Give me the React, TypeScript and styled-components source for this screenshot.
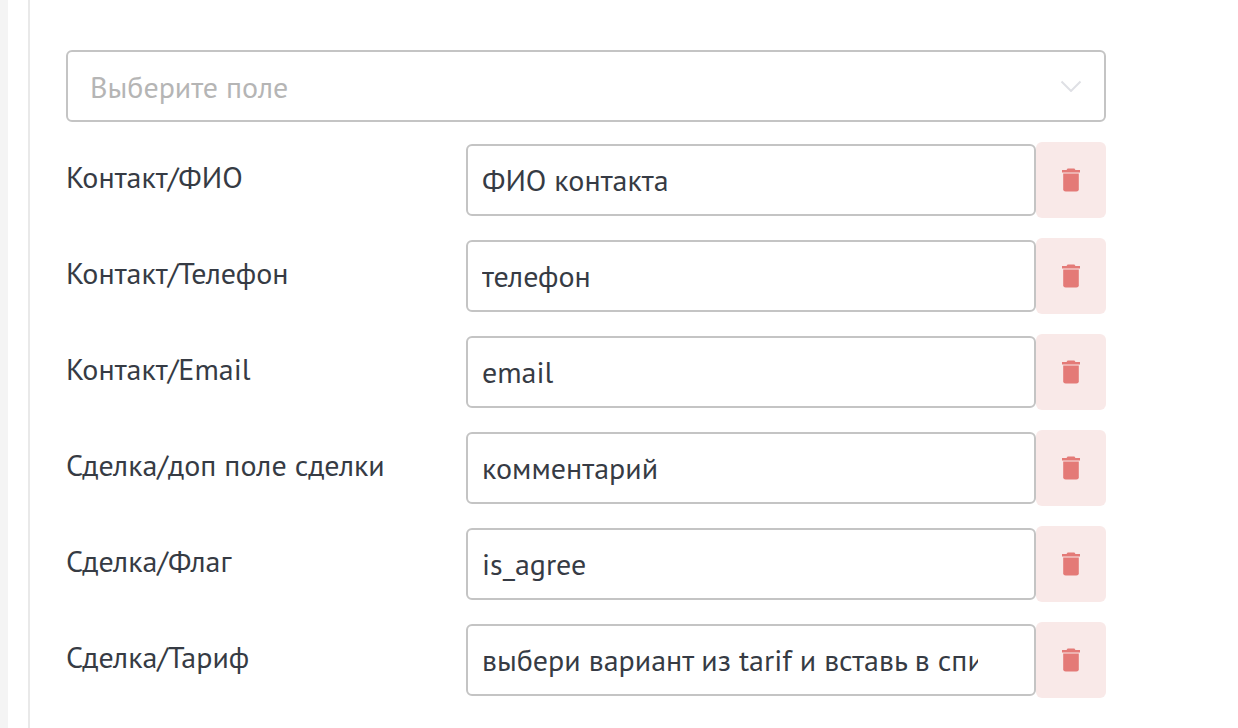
import React, { useState } from "react";
import styled, { createGlobalStyle } from "styled-components";

const GlobalStyle = createGlobalStyle`
  *, *::before, *::after { box-sizing: border-box; }
  body {
    margin: 0;
    background: #ffffff;
    color: #363b44;
    font-family: "PT Sans", "Noto Sans", sans-serif;
    font-size: 30px;
    line-height: 36px;
  }
`;

const Page = styled.div`
  display: flex;
  gap: 20px;
  min-height: 100vh;
`;

const Gutter = styled.div`
  flex: 0 0 8px;
  background: #f4f4f4;
`;

const Panel = styled.main`
  flex: 1;
  min-width: 0;
  padding: 50px 132px 30px 36px;
  border-left: 2px solid #e9e9e9;
`;

const FieldForm = styled.form`
  display: flex;
  flex-direction: column;
  gap: 20px;
`;

const SelectWrap = styled.div`
  position: relative;
`;

const FieldSelect = styled.select`
  display: block;
  width: 100%;
  height: 72px;
  padding: 2px 60px 0 22px;
  border: 2px solid #c4c4c4;
  border-radius: 6px;
  appearance: none;
  background: #ffffff;
  color: #b5b5b5;
  font: inherit;
`;

const Chevron = styled.svg`
  position: absolute;
  top: 30px;
  right: 24px;
  pointer-events: none;
`;

const Row = styled.div`
  display: flex;
  align-items: center;
`;

const RowLabel = styled.label`
  flex: 0 0 400px;
  padding-bottom: 6px;
  white-space: nowrap;
`;

const RowInput = styled.input`
  flex: 1;
  min-width: 0;
  height: 72px;
  padding: 0 56px 2px 14px;
  border: 2px solid #c4c4c4;
  border-radius: 6px;
  background: #ffffff;
  color: inherit;
  font: inherit;
`;

const DeleteButton = styled.button`
  display: flex;
  flex: 0 0 70px;
  align-items: center;
  justify-content: center;
  height: 76px;
  padding: 0;
  border: 0;
  border-radius: 6px;
  background: #f9e9e8;
  color: #e47a77;
  cursor: pointer;
`;

const TrashIcon = () => (
  <svg width="18" height="24" viewBox="0 0 18 24" fill="currentColor" aria-hidden="true">
    <path d="M5.6 0.6h6.8l1.1 1.3H18v2.7H0V1.9h4.5z" />
    <path d="M1.2 5.5h15.6v15.7a2.4 2.4 0 0 1-2.4 2.4H3.6a2.4 2.4 0 0 1-2.4-2.4z" />
  </svg>
);

const initialFields = [
  { id: "name", label: "Контакт/ФИО", value: "ФИО контакта" },
  { id: "phone", label: "Контакт/Телефон", value: "телефон" },
  { id: "email", label: "Контакт/Email", value: "email" },
  { id: "extra", label: "Сделка/доп поле сделки", value: "комментарий" },
  { id: "flag", label: "Сделка/Флаг", value: "is_agree" },
  { id: "tariff", label: "Сделка/Тариф", value: "выбери вариант из tarif и вставь в список" },
];

export default function App() {
  const [fields, setFields] = useState(initialFields);
  const remove = (id: string) => setFields(fields.filter((f) => f.id !== id));

  return (
    <>
      <GlobalStyle />
      <Page>
        <Gutter />
        <Panel>
          <FieldForm>
            <SelectWrap>
              <FieldSelect aria-label="Выберите поле" defaultValue="">
                <option value="">Выберите поле</option>
              </FieldSelect>
              <Chevron width="22" height="12" viewBox="0 0 22 12" fill="none" stroke="#dfe0e5" strokeWidth="2" aria-hidden="true">
                <path d="M1.5 1.5L11 11L20.5 1.5" />
              </Chevron>
            </SelectWrap>
            {fields.map((f) => (
              <Row key={f.id}>
                <RowLabel htmlFor={f.id}>{f.label}</RowLabel>
                <RowInput id={f.id} type="text" defaultValue={f.value} />
                <DeleteButton type="button" aria-label={`Удалить ${f.label}`} onClick={() => remove(f.id)}>
                  <TrashIcon />
                </DeleteButton>
              </Row>
            ))}
          </FieldForm>
        </Panel>
      </Page>
    </>
  );
}
